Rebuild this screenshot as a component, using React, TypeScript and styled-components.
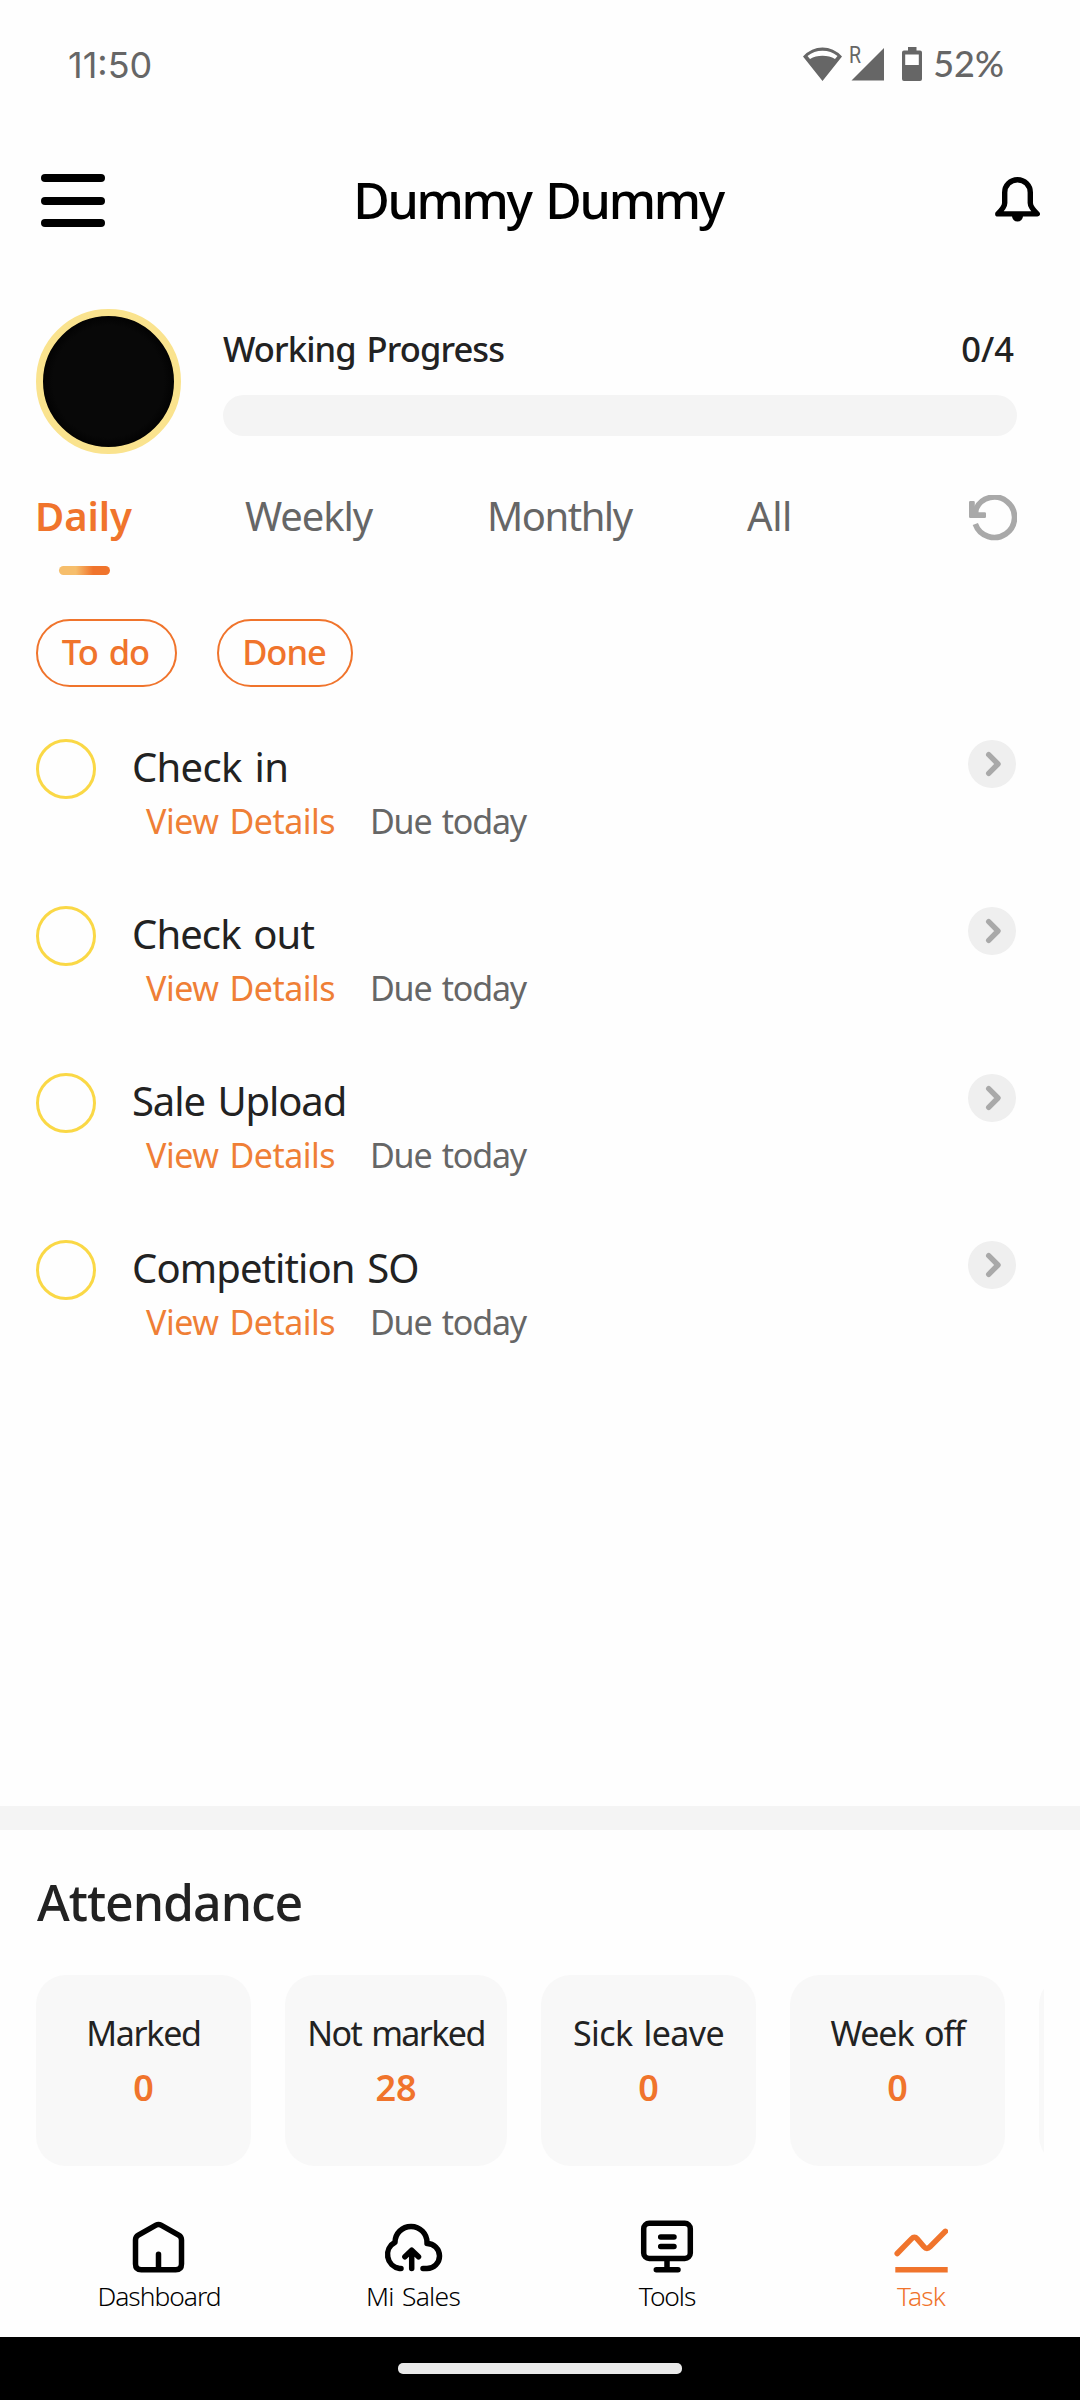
import React from "react";
import styled, { createGlobalStyle } from "styled-components";

const ORANGE = "#f0742c";
const INK = "#222222";
const GREY = "#666666";

const GlobalStyle = createGlobalStyle`
  * { box-sizing: border-box; }
  body {
    margin: 0;
    background: #fefefe;
    font-family: "Noto Sans", "Open Sans", sans-serif;
    -webkit-font-smoothing: antialiased;
  }
  svg { display: block; flex: none; }
  button {
    border: 0;
    padding: 0;
    background: none;
    font: inherit;
    color: inherit;
  }
`;

const Screen = styled.div`
  width: 1080px;
  height: 2400px;
  display: flex;
  flex-direction: column;
  overflow: hidden;
  background: #fefefe;
`;

const Label = styled.span<{
  $size: number;
  $line: number;
  $weight?: number;
  $spacing?: number;
  $color?: string;
}>`
  display: block;
  white-space: nowrap;
  font-size: ${(p) => p.$size}px;
  line-height: ${(p) => p.$line}px;
  font-weight: ${(p) => p.$weight ?? 400};
  letter-spacing: ${(p) => p.$spacing ?? 0}px;
  word-spacing: 0.08em;
  color: ${(p) => p.$color ?? INK};
`;

/* status bar */

const StatusBar = styled.header`
  height: 128px;
  padding: 0 76px 0 68px;
  display: flex;
  align-items: center;
  justify-content: space-between;
  color: ${GREY};
`;

const Clock = styled(Label)`
  font-family: Inter, sans-serif;
  padding-top: 1px;
`;

const StatusIcons = styled.div`
  display: flex;
  align-items: center;
`;

const Percent = styled(Label)`
  font-family: Lato, sans-serif;
  margin-left: 11px;
  padding-bottom: 2px;
`;

const RoamingMark = styled.span`
  font-family: Roboto, sans-serif;
  font-size: 23px;
  line-height: 20px;
  width: 12px;
  height: 36px;
  margin: 0 -9px 0 6px;
  transform: scaleX(0.85);
`;

/* title bar */

const TitleBar = styled.div`
  height: 143px;
  padding: 0 40px 0 41px;
  display: grid;
  grid-template-columns: 64px 1fr 45px;
  align-items: center;
  justify-items: center;
`;

const MenuButton = styled.button`
  width: 64px;
  height: 53px;
  margin-top: 2px;
  display: flex;
  flex-direction: column;
  justify-content: space-between;
`;

const MenuLine = styled.span`
  height: 8px;
  border-radius: 4px;
  background: #000;
`;

const Title = styled(Label)`
  margin: 0;
  padding: 0 24px 0 0;
`;

/* profile */

const Profile = styled.section`
  margin-top: 38px;
  padding: 0 63px 0 36px;
  height: 145px;
  display: flex;
  gap: 42px;
`;

const Avatar = styled.div`
  width: 145px;
  height: 145px;
  flex: none;
  border-radius: 50%;
  border: 7px solid #fae38e;
  background: radial-gradient(circle, #080808 60%, #020202 72%);
`;

const Progress = styled.div`
  flex: 1;
  padding-top: 17px;
`;

const ProgressHead = styled.div`
  display: flex;
  justify-content: space-between;
  padding-right: 3px;
`;

const ProgressTrack = styled.div`
  margin-top: 24px;
  height: 41px;
  border-radius: 21px;
  background: #f4f4f4;
`;

/* tabs and filters */

const Tabs = styled.nav`
  margin-top: 35px;
  height: 86px;
  padding: 0 63px 0 35px;
  display: grid;
  grid-template-columns: 210px 242px 260px 1fr 48px;
  align-items: start;
`;

const Tab = styled.button`
  padding-top: 1px;
  display: flex;
  flex-direction: column;
  align-items: flex-start;
`;

const TabIndicator = styled.span`
  width: 51px;
  height: 9px;
  margin: 24px 0 0 24px;
  border-radius: 5px;
  background: linear-gradient(90deg, #f6be6c 33%, ${ORANGE} 67%);
`;

const ResetButton = styled.button`
  padding-top: 6px;
`;

const Filters = styled.div`
  display: flex;
  gap: 40px;
  margin: 44px 0 0 36px;
`;

const Pill = styled.button<{ $width: number }>`
  width: ${(p) => p.$width}px;
  height: 68px;
  padding: 0 2px 2px 0;
  display: flex;
  justify-content: center;
  align-items: center;
  border: 2px solid ${ORANGE};
  border-radius: 34px;
`;

/* task list */

const TaskList = styled.ul`
  flex: 1;
  list-style: none;
  margin: 52px 0 0;
  padding: 0 64px 0 36px;
`;

const TaskRow = styled.li`
  height: 167px;
  display: flex;
  align-items: flex-start;
`;

const Check = styled.span`
  width: 60px;
  height: 60px;
  flex: none;
  border: 3px solid #fad846;
  border-radius: 50%;
`;

const TaskBody = styled.div`
  flex: 1;
  padding-top: 1px;
  margin-left: 36px;
`;

const TaskMeta = styled.div`
  margin: 5px 0 0 14px;
  display: grid;
  grid-template-columns: 224px auto;
`;

const OpenButton = styled.button`
  width: 48px;
  height: 48px;
  margin-top: 1px;
  border-radius: 50%;
  background: #efefef;
`;

/* attendance */

const Attendance = styled.section`
  border-top: 24px solid #f4f4f4;
  height: 414px;
  padding: 39px 36px 0;
`;

const SectionTitle = styled(Label)`
  margin: 0;
  padding-left: 1px;
`;

const Cards = styled.div`
  margin-top: 39px;
  display: flex;
  gap: 34px;
  overflow: hidden;
`;

const Card = styled.div<{ $wide?: boolean }>`
  width: ${(p) => (p.$wide ? 222 : 215)}px;
  height: 191px;
  flex: none;
  padding-top: 35px;
  display: flex;
  flex-direction: column;
  align-items: center;
  gap: 7px;
  border-radius: 30px;
  background: #f8f8f8;
`;

/* bottom navigation */

const BottomNav = styled.nav`
  height: 117px;
  padding: 0 32px;
  display: grid;
  grid-template-columns: repeat(4, 1fr);
`;

const NavItem = styled.button<{ $active?: boolean }>`
  display: flex;
  flex-direction: column;
  align-items: center;
  gap: 4px;
  color: ${(p) => (p.$active ? ORANGE : "#000")};
`;

const GestureBar = styled.footer`
  height: 63px;
  display: flex;
  align-items: center;
  justify-content: center;
  background: #000;
`;

const Handle = styled.span`
  width: 284px;
  height: 11px;
  border-radius: 5px;
  background: #eaeaea;
`;

const WifiIcon = () => (
  <svg width="39" height="34" viewBox="0 0 39 34" fill={GREY}>
    <path
      fillRule="evenodd"
      d="M19.5 34L0 9.5Q8.5 .6 19.5 .6T39 9.5ZM7 12Q12.5 8.7 19.5 8.7T32 12L34.5 9Q28 3.7 19.5 3.7T4.5 9Z"
    />
  </svg>
);

const SignalIcon = () => (
  <svg width="33" height="34" viewBox="0 0 33 34" fill={GREY}>
    <path d="M33 1V33.5H.5Z" />
  </svg>
);

const Battery = styled.svg`
  margin-left: 18px;
`;

const BatteryIcon = () => (
  <Battery width="20" height="34" viewBox="0 0 20 34" fill={GREY}>
    <path
      fillRule="evenodd"
      d="M6 0H14.5V3.5H18Q20 3.5 20 5.5V32Q20 34 18 34H2Q0 34 0 32V5.5Q0 3.5 2 3.5H6ZM3.2 7.5V18H16.8V7.5Z"
    />
  </Battery>
);

const BellIcon = () => (
  <svg width="45" height="45" viewBox="0 0 45 45">
    <path
      d="M9.7 15.5A12.8 12.8 0 0 1 35.3 15.5V26Q35.3 30 42.2 36.9H2.8Q9.7 30 9.7 26Z"
      fill="none"
      stroke="#000"
      strokeWidth="5.4"
      strokeLinejoin="round"
    />
    <path d="M17 39a5.5 5.5 0 0 0 11 0z" />
  </svg>
);

const ResetIcon = () => (
  <svg width="48" height="46" viewBox="0 0 48 46" fill="#a9a9a9">
    <path
      d="M6.3 29A20.2 20.2 0 1 0 7 13.8"
      fill="none"
      stroke="#a9a9a9"
      strokeWidth="5.6"
    />
    <path d="M1.3 6H4.5Q5.8 6 5.8 7.3V12L10 13L9.5 17.3H15.7Q17 17.3 17 18.6V21.7Q17 23 15.7 23H1.3Q0 23 0 21.7V7.3Q0 6 1.3 6Z" />
  </svg>
);

const ChevronIcon = () => (
  <svg width="48" height="48" viewBox="0 0 48 48">
    <path
      d="M20.7 14.7L30 24L20.7 33.3"
      fill="none"
      stroke="#a9a9a9"
      strokeWidth="5.4"
      strokeLinecap="round"
      strokeLinejoin="round"
    />
  </svg>
);

const NavGlyph = styled.svg`
  fill: none;
  stroke: currentColor;
  stroke-width: 5.5;
  stroke-linecap: round;
  stroke-linejoin: round;
`;

const HomeIcon = () => (
  <NavGlyph width="54" height="54" viewBox="0 -1 54 54">
    <path d="M3.5 19Q3.5 15.8 6.3 14.2L24 4.2Q26.5 2.8 29 4.2L46.7 14.2Q49.5 15.8 49.5 19V43Q49.5 48.8 43.7 48.8H9.3Q3.5 48.8 3.5 43ZM26.5 33.3V48" />
  </NavGlyph>
);

const CloudIcon = () => (
  <NavGlyph width="62" height="54" viewBox="0 -1 62 54">
    <path d="M19 47.5H17.5A14 14 0 0 1 13 21.3A16 16 0 1 1 45 21.5V22.5A12.5 12.5 0 0 1 45 47.5H41" />
    <path d="M29.7 47.5V30M22.9 35.8L29.7 29.2L36.5 35.8" />
  </NavGlyph>
);

const ToolsIcon = () => (
  <NavGlyph width="54" height="54" viewBox="0 0 54 54">
    <rect x="3.7" y="3.3" width="46.6" height="35.2" rx="5.5" />
    <path d="M20.7 17H34M20.7 26.5H34M27 39V49M16.3 49.7H38" />
  </NavGlyph>
);

const TaskIcon = () => (
  <NavGlyph width="54" height="54" viewBox="0 0 54 54">
    <path d="M3.2 33.5L17.5 18.9Q20.5 15.8 23.2 18.9L30 26.8Q32.8 30 36 26.8L51.4 11.3" />
    <path d="M1.3 49.7H53.7" strokeLinecap="butt" />
  </NavGlyph>
);

const tabs = [
  { name: "Daily", spacing: -0.1, active: true },
  { name: "Weekly", spacing: -1.1 },
  { name: "Monthly", spacing: -1.5 },
  { name: "All", spacing: -0.4 },
];

const tasks = [
  { name: "Check in", spacing: -0.7 },
  { name: "Check out", spacing: -0.9 },
  { name: "Sale Upload", spacing: -1.1 },
  { name: "Competition SO", spacing: -0.9 },
];

const stats = [
  { name: "Marked", value: 0, spacing: -1.3 },
  { name: "Not marked", value: 28, spacing: -1.6, wide: true },
  { name: "Sick leave", value: 0, spacing: -0.6 },
  { name: "Week off", value: 0, spacing: -1.1 },
];

const navItems = [
  { name: "Dashboard", Icon: HomeIcon, spacing: -1 },
  { name: "Mi Sales", Icon: CloudIcon, spacing: -0.7 },
  { name: "Tools", Icon: ToolsIcon, spacing: -1.1 },
  { name: "Task", Icon: TaskIcon, spacing: -0.9, active: true },
];

export default function App() {
  return (
    <>
      <GlobalStyle />
      <Screen>
        <StatusBar>
          <Clock $size={36} $line={44} $color={GREY}>11:50</Clock>
          <StatusIcons>
            <WifiIcon />
            <RoamingMark>R</RoamingMark>
            <SignalIcon />
            <BatteryIcon />
            <Percent $size={36} $line={44} $weight={500} $color={GREY}>52%</Percent>
          </StatusIcons>
        </StatusBar>

        <TitleBar>
          <MenuButton aria-label="Menu">
            <MenuLine />
            <MenuLine />
            <MenuLine />
          </MenuButton>
          <Title as="h1" $size={50} $line={68} $weight={500} $spacing={-2.3} $color="#000">
            Dummy Dummy
          </Title>
          <BellIcon />
        </TitleBar>

        <Profile>
          <Avatar />
          <Progress>
            <ProgressHead>
              <Label $size={34.5} $line={45} $weight={500} $spacing={-0.9}>Working Progress</Label>
              <Label $size={34.5} $line={45} $weight={500} $spacing={0}>0/4</Label>
            </ProgressHead>
            <ProgressTrack />
          </Progress>
        </Profile>

        <Tabs>
          {tabs.map((tab) => (
            <Tab key={tab.name}>
              <Label
                $size={40}
                $line={52}
                $weight={tab.active ? 600 : 400}
                $spacing={tab.spacing}
                $color={tab.active ? ORANGE : GREY}
              >
                {tab.name}
              </Label>
              {tab.active && <TabIndicator />}
            </Tab>
          ))}
          <ResetButton aria-label="Reset">
            <ResetIcon />
          </ResetButton>
        </Tabs>

        <Filters>
          <Pill $width={141}>
            <Label $size={34.5} $line={46} $weight={500} $spacing={-1} $color={ORANGE}>To do</Label>
          </Pill>
          <Pill $width={136}>
            <Label $size={34.5} $line={46} $weight={500} $spacing={-1} $color={ORANGE}>Done</Label>
          </Pill>
        </Filters>

        <TaskList>
          {tasks.map(({ name, spacing }) => (
            <TaskRow key={name}>
              <Check />
              <TaskBody>
                <Label $size={40} $line={53} $spacing={spacing}>{name}</Label>
                <TaskMeta>
                  <Label $size={34} $line={46} $spacing={-0.5} $color="#ef7f36">View Details</Label>
                  <Label $size={34} $line={46} $spacing={-1.2} $color={GREY}>Due today</Label>
                </TaskMeta>
              </TaskBody>
              <OpenButton aria-label={`Open ${name}`}>
                <ChevronIcon />
              </OpenButton>
            </TaskRow>
          ))}
        </TaskList>

        <Attendance>
          <SectionTitle as="h2" $size={50} $line={67} $weight={500} $spacing={-1}>Attendance</SectionTitle>
          <Cards>
            {stats.map((stat) => (
              <Card key={stat.name} $wide={stat.wide}>
                <Label $size={34} $line={46} $spacing={stat.spacing}>{stat.name}</Label>
                <Label $size={36} $line={50} $weight={600} $color={ORANGE}>{stat.value}</Label>
              </Card>
            ))}
            <Card />
          </Cards>
        </Attendance>

        <BottomNav>
          {navItems.map(({ name, Icon, spacing, active }) => (
            <NavItem key={name} $active={active}>
              <Icon />
              <Label $size={26.4} $line={36} $weight={300} $spacing={spacing} $color="currentColor">
                {name}
              </Label>
            </NavItem>
          ))}
        </BottomNav>

        <GestureBar>
          <Handle />
        </GestureBar>
      </Screen>
    </>
  );
}
